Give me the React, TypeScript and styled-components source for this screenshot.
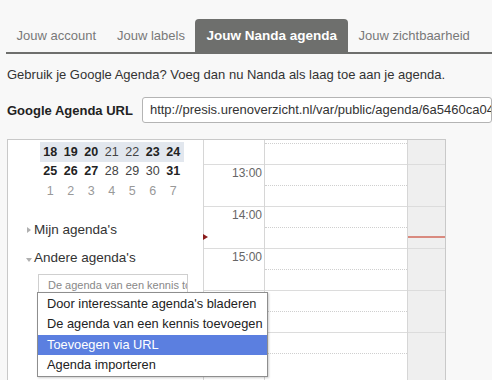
import React from "react";
import styled, { createGlobalStyle } from "styled-components";

const GlobalStyle = createGlobalStyle`
	html, body {
		margin: 0;
		padding: 0;
		background: #f8f8f8;
		overflow: hidden;
	}
	body {
		font-family: "Liberation Sans", Arial, sans-serif;
		color: #333;
	}
`;

const Page = styled.div`
	padding-left: 7px;
	width: 485px;
	height: 380px;
	overflow: hidden;
`;

const TabBar = styled.div`
	display: flex;
	align-items: flex-end;
	margin-left: -1px;
	padding-top: 19px;
	border-bottom: 2px solid #6e6f6d;
`;

const Tab = styled.div<{ $active?: boolean }>`
	height: 33px;
	padding: 0 ${(p) => (p.$active ? "11px" : "10.5px")};
	display: flex;
	align-items: center;
	font-size: ${(p) => (p.$active ? "13.5px" : "13px")};
	font-weight: ${(p) => (p.$active ? 700 : 400)};
	color: ${(p) => (p.$active ? "#fff" : "#787878")};
	background: ${(p) => (p.$active ? "#6e6f6d" : "transparent")};
	border-radius: 4px 4px 0 0;
	white-space: nowrap;
`;

const Intro = styled.p`
	margin: 13px 0 0;
	font-size: 13px;
	line-height: 16px;
	color: #333;
`;

const UrlRow = styled.div`
	display: flex;
	align-items: center;
	margin-top: 14px;
	gap: 9px;
`;

const UrlLabel = styled.span`
	font-size: 13px;
	font-weight: 700;
	color: #222;
	white-space: nowrap;
`;

const UrlField = styled.div`
	height: 26px;
	width: 420px;
	box-sizing: border-box;
	border: 1px solid #b4b4b4;
	border-radius: 3px;
	background: #fff;
	padding-left: 7px;
	font-size: 13px;
	line-height: 24px;
	color: #333;
	white-space: nowrap;
	overflow: hidden;
`;

const Frame = styled.div`
	margin-top: 16px;
	width: 439px;
	height: 260px;
	box-sizing: border-box;
	border: 1px solid #c9c9c9;
	background: #fff;
	display: grid;
	grid-template-columns: 196px 61px 143px 37px;
	overflow: hidden;
`;

const LeftPanel = styled.div`
	border-right: 1px solid #d6d6d6;
	padding-top: 2px;
`;

const MiniCal = styled.div`
	margin-left: 32px;
	width: 143.5px;
`;

const WeekRow = styled.div<{ $current?: boolean }>`
	display: grid;
	grid-template-columns: repeat(7, 20.5px);
	height: 19.5px;
	align-items: center;
	background: ${(p) => (p.$current ? "#e2e7ee" : "transparent")};
`;

const Day = styled.span<{ $bold?: boolean; $other?: boolean }>`
	text-align: center;
	font-size: 12.5px;
	font-weight: ${(p) => (p.$bold ? 700 : 400)};
	color: ${(p) => (p.$other ? "#999" : p.$bold ? "#222" : "#444")};
`;

const Section = styled.div<{ $gap: number }>`
	display: flex;
	align-items: center;
	margin-top: ${(p) => p.$gap}px;
	padding-left: 26px;
	height: 18px;
	font-size: 13.5px;
	color: #333;
	position: relative;
`;

const Arrow = styled.span<{ $open?: boolean }>`
	position: absolute;
	left: ${(p) => (p.$open ? "18px" : "19px")};
	top: ${(p) => (p.$open ? "9px" : "6px")};
	width: 0;
	height: 0;
	${(p) =>
		p.$open
			? `border-left: 3.5px solid transparent;
	border-right: 3.5px solid transparent;
	border-top: 4px solid #b0b0b0;`
			: `border-top: 3.5px solid transparent;
	border-bottom: 3.5px solid transparent;
	border-left: 4px solid #b0b0b0;`}
`;

const SearchWrap = styled.div`
	position: relative;
	margin: 7px 0 0 30px;
	width: 150px;
`;

const SearchBox = styled.div`
	height: 22px;
	box-sizing: border-box;
	border: 1px solid #cfcfcf;
	padding: 4px 0 0 9px;
	font-size: 11px;
	color: #888;
	white-space: nowrap;
	overflow: hidden;
`;

const Menu = styled.div`
	position: absolute;
	z-index: 2;
	top: 18px;
	left: -1px;
	width: 231px;
	box-sizing: border-box;
	border: 1px solid #8e8e8e;
	background: #fff;
	padding-top: 1px;
	box-shadow: 1px 1px 2px rgba(0, 0, 0, 0.2);
`;

const MenuItem = styled.div<{ $active?: boolean }>`
	height: 20.5px;
	line-height: 20.5px;
	padding-left: 9px;
	font-size: 12.8px;
	color: ${(p) => (p.$active ? "#fff" : "#222")};
	background: ${(p) => (p.$active ? "#5b7fe0" : "transparent")};
	white-space: nowrap;
`;

const Column = styled.div<{ $shade?: boolean; $last?: boolean }>`
	position: relative;
	overflow: hidden;
	background: ${(p) => (p.$shade ? "#efefef" : "#fff")};
	border-right: ${(p) => (p.$last ? "none" : "1px solid #d6d6d6")};
`;

const TimeColumn = styled.div`
	position: relative;
	border-right: 1px solid #d6d6d6;
`;

const Track = styled.div`
	margin-top: -18px;
`;

const Slot = styled.div`
	position: relative;
	height: 42px;
	box-sizing: border-box;
	border-top: 1px solid #dcdcdc;
`;

const TimeLabel = styled.div`
	text-align: right;
	padding: 1px 2px 0 0;
	font-size: 12px;
	line-height: 14px;
	color: #666;
`;

const HalfLine = styled.div`
	margin-top: 20px;
	border-top: 1px dotted #cfcfcf;
`;

const NowMarker = styled.span`
	position: absolute;
	left: -1px;
	top: 27px;
	width: 0;
	height: 0;
	border-top: 3.5px solid transparent;
	border-bottom: 3.5px solid transparent;
	border-left: 5px solid #8a1c1c;
`;

const NowLine = styled.span`
	position: absolute;
	left: 0;
	right: 0;
	top: 29px;
	height: 2px;
	background: #d98a7f;
`;

const tabs = ["Jouw account", "Jouw labels", "Jouw Nanda agenda", "Jouw zichtbaarheid"];
const hours = [12, 13, 14, 15, 16, 17];

const weeks = [
	{ current: true, days: [18, 19, 20, 21, 22, 23, 24], bold: [18, 19, 20, 23, 24], other: false },
	{ current: false, days: [25, 26, 27, 28, 29, 30, 31], bold: [25, 26, 27, 31], other: false },
	{ current: false, days: [1, 2, 3, 4, 5, 6, 7], bold: [], other: true },
];

const menuItems = [
	"Door interessante agenda's bladeren",
	"De agenda van een kennis toevoegen",
	"Toevoegen via URL",
	"Agenda importeren",
];

export default function App() {
	return (
		<Page>
			<GlobalStyle />
			<TabBar>
				{tabs.map((tab) => (
					<Tab key={tab} $active={tab === "Jouw Nanda agenda"}>
						{tab}
					</Tab>
				))}
			</TabBar>

			<Intro>Gebruik je Google Agenda? Voeg dan nu Nanda als laag toe aan je agenda.</Intro>

			<UrlRow>
				<UrlLabel>Google Agenda URL</UrlLabel>
				<UrlField>http://presis.urenoverzicht.nl/var/public/agenda/6a5460ca04f1c2b9</UrlField>
			</UrlRow>

			<Frame>
				<LeftPanel>
					<MiniCal>
						{weeks.map((week, i) => (
							<WeekRow key={i} $current={week.current}>
								{week.days.map((d) => (
									<Day key={d} $bold={week.bold.includes(d)} $other={week.other}>
										{d}
									</Day>
								))}
							</WeekRow>
						))}
					</MiniCal>

					<Section $gap={20}>
						<Arrow />
						Mijn agenda's
					</Section>
					<Section $gap={10}>
						<Arrow $open />
						Andere agenda's
					</Section>

					<SearchWrap>
						<SearchBox>De agenda van een kennis toevoegen</SearchBox>
						<Menu>
							{menuItems.map((item) => (
								<MenuItem key={item} $active={item === "Toevoegen via URL"}>
									{item}
								</MenuItem>
							))}
						</Menu>
					</SearchWrap>
				</LeftPanel>

				<TimeColumn>
					<Track>
						{hours.map((h) => (
							<Slot key={h}>
								<TimeLabel>{h}:00</TimeLabel>
								{h === 14 && <NowMarker />}
							</Slot>
						))}
					</Track>
				</TimeColumn>

				<Column>
					<Track>
						{hours.map((h) => (
							<Slot key={h}>
								<HalfLine />
							</Slot>
						))}
					</Track>
				</Column>

				<Column $shade $last>
					<Track>
						{hours.map((h) => (
							<Slot key={h}>{h === 14 && <NowLine />}</Slot>
						))}
					</Track>
				</Column>
			</Frame>
		</Page>
	);
}
